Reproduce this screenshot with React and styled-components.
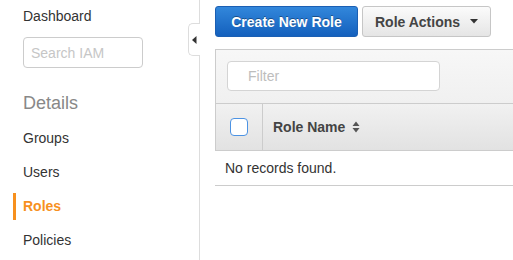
import React from 'react'
import styled, { createGlobalStyle } from 'styled-components'

const GlobalStyle = createGlobalStyle`
  html, body {
    margin: 0;
    padding: 0;
    background: #fff;
    font-family: "Liberation Sans", Arial, Helvetica, sans-serif;
    color: #333;
  }
`

const Layout = styled.div`
  display: flex;
  width: 513px;
  height: 260px;
  overflow: hidden;
`

const Sidebar = styled.nav`
  position: relative;
  flex: 0 0 200px;
  box-sizing: border-box;
  border-right: 1px solid #ddd;
  padding-top: 8px;
  display: flex;
  flex-direction: column;
`

const TopLink = styled.div`
  padding-left: 23px;
  font-size: 14px;
  line-height: 16px;
  color: #333;
`

const SearchBox = styled.input`
  margin: 13px 0 0 23px;
  width: 120px;
  height: 31px;
  box-sizing: border-box;
  border: 1px solid #ccc;
  border-radius: 4px;
  padding: 0 7px;
  font-family: inherit;
  font-size: 14px;
  color: #333;
  outline: none;

  &::placeholder {
    color: #c6c6c6;
  }
`

const SectionTitle = styled.div`
  margin-top: 25px;
  padding-left: 23px;
  font-size: 18px;
  line-height: 20px;
  color: #888;
`

const NavList = styled.div`
  margin-top: 12px;
  display: flex;
  flex-direction: column;
  gap: 7px;
`

const NavItem = styled.div`
  margin-left: 13px;
  padding-left: 7px;
  height: 27px;
  line-height: 27px;
  font-size: 14px;
  border-left: 3px solid ${p => (p.$active ? '#f7901e' : 'transparent')};
  color: ${p => (p.$active ? '#f7901e' : '#333')};
  font-weight: ${p => (p.$active ? 700 : 400)};
`

const CollapseTab = styled.div`
  position: absolute;
  top: 23px;
  right: -1px;
  width: 12px;
  height: 33px;
  box-sizing: border-box;
  border: 1px solid #ddd;
  border-right: none;
  border-radius: 5px 0 0 5px;
  background: #fff;
  display: flex;
  align-items: center;
  justify-content: center;
`

const Main = styled.main`
  flex: 1;
  padding: 6px 0 0 15px;
  min-width: 0;
`

const Toolbar = styled.div`
  display: flex;
  gap: 4px;
`

const Button = styled.button`
  height: 31px;
  box-sizing: border-box;
  border-radius: 3px;
  font-family: inherit;
  font-size: 14px;
  font-weight: 700;
  padding: 0;
  white-space: nowrap;
  display: flex;
  align-items: center;
  justify-content: center;
  gap: 10px;
  cursor: pointer;
`

const PrimaryButton = styled(Button)`
  width: 143px;
  color: #fff;
  border: 1px solid #1b5fb3;
  background: linear-gradient(#3287db, #1460bd);
  text-shadow: 0 -1px 0 rgba(0, 0, 0, 0.35);
`

const DefaultButton = styled(Button)`
  width: 129px;
  color: #444;
  border: 1px solid #c6c6c6;
  background: linear-gradient(#fbfbfb, #e5e5e5);
`

const Panel = styled.div`
  margin-top: 12px;
  width: 320px;
`

const FilterBar = styled.div`
  height: 54px;
  box-sizing: border-box;
  border: 1px solid #ccc;
  border-bottom: none;
  background: linear-gradient(#f7f7f7, #f0f0f0);
  padding: 11px 0 0 11px;
`

const FilterInput = styled.input`
  width: 213px;
  height: 30px;
  box-sizing: border-box;
  border: 1px solid #d4d4d4;
  border-radius: 4px;
  padding: 0 0 0 20px;
  font-family: inherit;
  font-size: 14px;
  outline: none;

  &::placeholder {
    color: #bdbdbd;
  }
`

const HeaderRow = styled.div`
  display: flex;
  height: 48px;
  box-sizing: border-box;
  border: 1px solid #ccc;
  background: linear-gradient(#f1f1f1, #e2e2e2);
`

const CheckCell = styled.div`
  flex: 0 0 46px;
  border-right: 1px solid #ccc;
  display: flex;
  align-items: center;
  justify-content: center;
`

const Checkbox = styled.span`
  width: 18px;
  height: 18px;
  box-sizing: border-box;
  border: 1.5px solid #4d93e3;
  border-radius: 4px;
  background: #fff;
`

const HeaderCell = styled.div`
  display: flex;
  align-items: center;
  gap: 7px;
  padding-left: 10px;
  font-size: 14px;
  font-weight: 700;
  color: #444;
`

const EmptyRow = styled.div`
  height: 35px;
  box-sizing: border-box;
  border-bottom: 1px solid #ccc;
  padding-left: 10px;
  display: flex;
  align-items: center;
  font-size: 14px;
  color: #333;
`

const Caret = () => (
  <svg width="8" height="5" viewBox="0 0 8 5">
    <path d="M0 0h8L4 4.5z" fill="#333" />
  </svg>
)

const SortIcon = () => (
  <svg width="8" height="12" viewBox="0 0 8 12">
    <path d="M4 0.5L7.5 5H0.5z M4 11.5L0.5 7H7.5z" fill="#555" />
  </svg>
)

const LeftArrow = () => (
  <svg width="5" height="8" viewBox="0 0 5 8">
    <path d="M4.5 0v8L0 4z" fill="#333" />
  </svg>
)

const navItems = ['Groups', 'Users', 'Roles', 'Policies']

const App = () => (
  <>
    <GlobalStyle />
    <Layout>
      <Sidebar>
        <TopLink>Dashboard</TopLink>
        <SearchBox placeholder="Search IAM" />
        <SectionTitle>Details</SectionTitle>
        <NavList>
          {navItems.map(item => (
            <NavItem key={item} $active={item === 'Roles'}>{item}</NavItem>
          ))}
        </NavList>
        <CollapseTab>
          <LeftArrow />
        </CollapseTab>
      </Sidebar>
      <Main>
        <Toolbar>
          <PrimaryButton>Create New Role</PrimaryButton>
          <DefaultButton>Role Actions <Caret /></DefaultButton>
        </Toolbar>
        <Panel>
          <FilterBar>
            <FilterInput placeholder="Filter" />
          </FilterBar>
          <HeaderRow>
            <CheckCell>
              <Checkbox />
            </CheckCell>
            <HeaderCell>Role Name <SortIcon /></HeaderCell>
          </HeaderRow>
          <EmptyRow>No records found.</EmptyRow>
        </Panel>
      </Main>
    </Layout>
  </>
)

export default App
